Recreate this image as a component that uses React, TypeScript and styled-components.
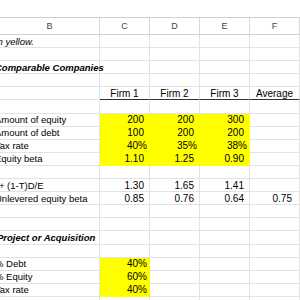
import * as React from 'react';
import styled, { createGlobalStyle } from 'styled-components';

const GlobalStyle = createGlobalStyle`
  html, body {
    margin: 0;
    padding: 0;
    background: #fff;
    overflow: hidden;
  }
  body {
    font-family: "Liberation Sans", Arial, sans-serif;
    color: #000;
  }
`;

const COLS = '100px 50px 50px 50px 50px 60px';

const Sheet = styled.div`
  width: 300px;
  height: 300px;
  overflow: hidden;
  display: flex;
  flex-direction: column;
`;

const TopBand = styled.div`
  height: 18px;
  flex: none;
  background: #fff;
  border-bottom: 1px solid #d0d0d0;
  box-sizing: border-box;
`;

const HeaderRow = styled.div`
  display: grid;
  grid-template-columns: ${COLS};
  height: 17px;
  flex: none;
  background: #fff;
  border-bottom: 1px solid #d0d0d0;
  box-sizing: border-box;
`;

const ColLetter = styled.div`
  display: flex;
  align-items: center;
  justify-content: center;
  font-size: 9px;
  color: #444;
  border-right: 1px solid #d8d8d8;
`;

const Row = styled.div`
  display: grid;
  grid-template-columns: ${COLS};
  height: 13.1px;
  flex: none;
`;

const Cell = styled.div<{ $fill?: boolean; $align?: string; $pad?: number; $rule?: boolean }>`
  box-sizing: border-box;
  display: flex;
  align-items: center;
  justify-content: ${(p) => p.$align || 'flex-start'};
  padding-right: ${(p) => p.$pad ?? 0}px;
  font-size: 10px;
  white-space: nowrap;
  background: ${(p) => (p.$fill ? '#ffff00' : 'transparent')};
  border-right: 1px solid ${(p) => (p.$fill ? '#ffff00' : '#e2e2e2')};
  border-bottom: 1px solid ${(p) => (p.$rule ? '#333' : p.$fill ? '#ffff00' : '#e2e2e2')};
`;

const Label = styled(Cell)<{ $bold?: boolean; $italic?: boolean; $indent?: number }>`
  overflow: visible;
  font-size: 9.5px;
  text-indent: ${(p) => p.$indent ?? -5}px;
  font-weight: ${(p) => (p.$bold ? 700 : 400)};
  font-style: ${(p) => (p.$italic ? 'italic' : 'normal')};
  position: relative;
  z-index: 1;
`;

const NoteText = styled.span`
  display: flex;
  justify-content: flex-end;
  width: 34px;
  font-style: italic;
`;

type RowData = {
  label?: string;
  bold?: boolean;
  indent?: number;
  values?: string[];
  fill?: number;
  header?: boolean;
  note?: boolean;
};

const rows: RowData[] = [
  { label: 'Input values in yellow.', note: true },
  {},
  { label: 'Comparable Companies', bold: true },
  {},
  { values: ['Firm 1', 'Firm 2', 'Firm 3', 'Average'], header: true },
  {},
  { label: 'Amount of equity', values: ['200', '200', '300'], fill: 3 },
  { label: 'Amount of debt', values: ['100', '200', '200'], fill: 3 },
  { label: 'Tax rate', values: ['40%', '35%', '38%'], fill: 3 },
  { label: 'Equity beta', values: ['1.10', '1.25', '0.90'], fill: 3 },
  {},
  { label: '1 + (1-T)D/E', indent: -9, values: ['1.30', '1.65', '1.41'] },
  { label: 'Unlevered equity beta', values: ['0.85', '0.76', '0.64', '0.75'] },
  {},
  {},
  { label: 'Project or Acquisition', bold: true, indent: -3 },
  {},
  { label: '% Debt', values: ['40%'], fill: 1 },
  { label: '% Equity', values: ['60%'], fill: 1 },
  { label: 'Tax rate', values: ['40%'], fill: 1 },
  {},
  {},
];

const padFor = (v: string, col: number) => {
  if (v.endsWith('%')) return 2;
  if (col === 3) return 7;
  return 5;
};

const SheetRow = ({ row }: { row: RowData }) => {
  const cols = [0, 1, 2, 3, 4];
  return (
    <Row>
      {row.note ? (
        <Label>
          <NoteText>{row.label}</NoteText>
        </Label>
      ) : (
        <Label $bold={row.bold} $italic={row.bold} $indent={row.indent}>
          {row.label}
        </Label>
      )}
      {cols.map((c) => {
        const v = row.values?.[c];
        if (row.header) {
          return (
            <Cell key={c} $align="center" $rule={c < 4}>
              {v}
            </Cell>
          );
        }
        const filled = row.fill !== undefined && c < row.fill;
        return (
          <Cell key={c} $fill={filled} $align="flex-end" $pad={v ? padFor(v, c) : 0}>
            {v}
          </Cell>
        );
      })}
    </Row>
  );
};

export default function App() {
  return (
    <>
      <GlobalStyle />
      <Sheet>
        <TopBand />
        <HeaderRow>
          {['B', 'C', 'D', 'E', 'F', 'G'].map((l) => (
            <ColLetter key={l}>{l}</ColLetter>
          ))}
        </HeaderRow>
        {rows.map((r, i) => (
          <SheetRow key={i} row={r} />
        ))}
      </Sheet>
    </>
  );
}
